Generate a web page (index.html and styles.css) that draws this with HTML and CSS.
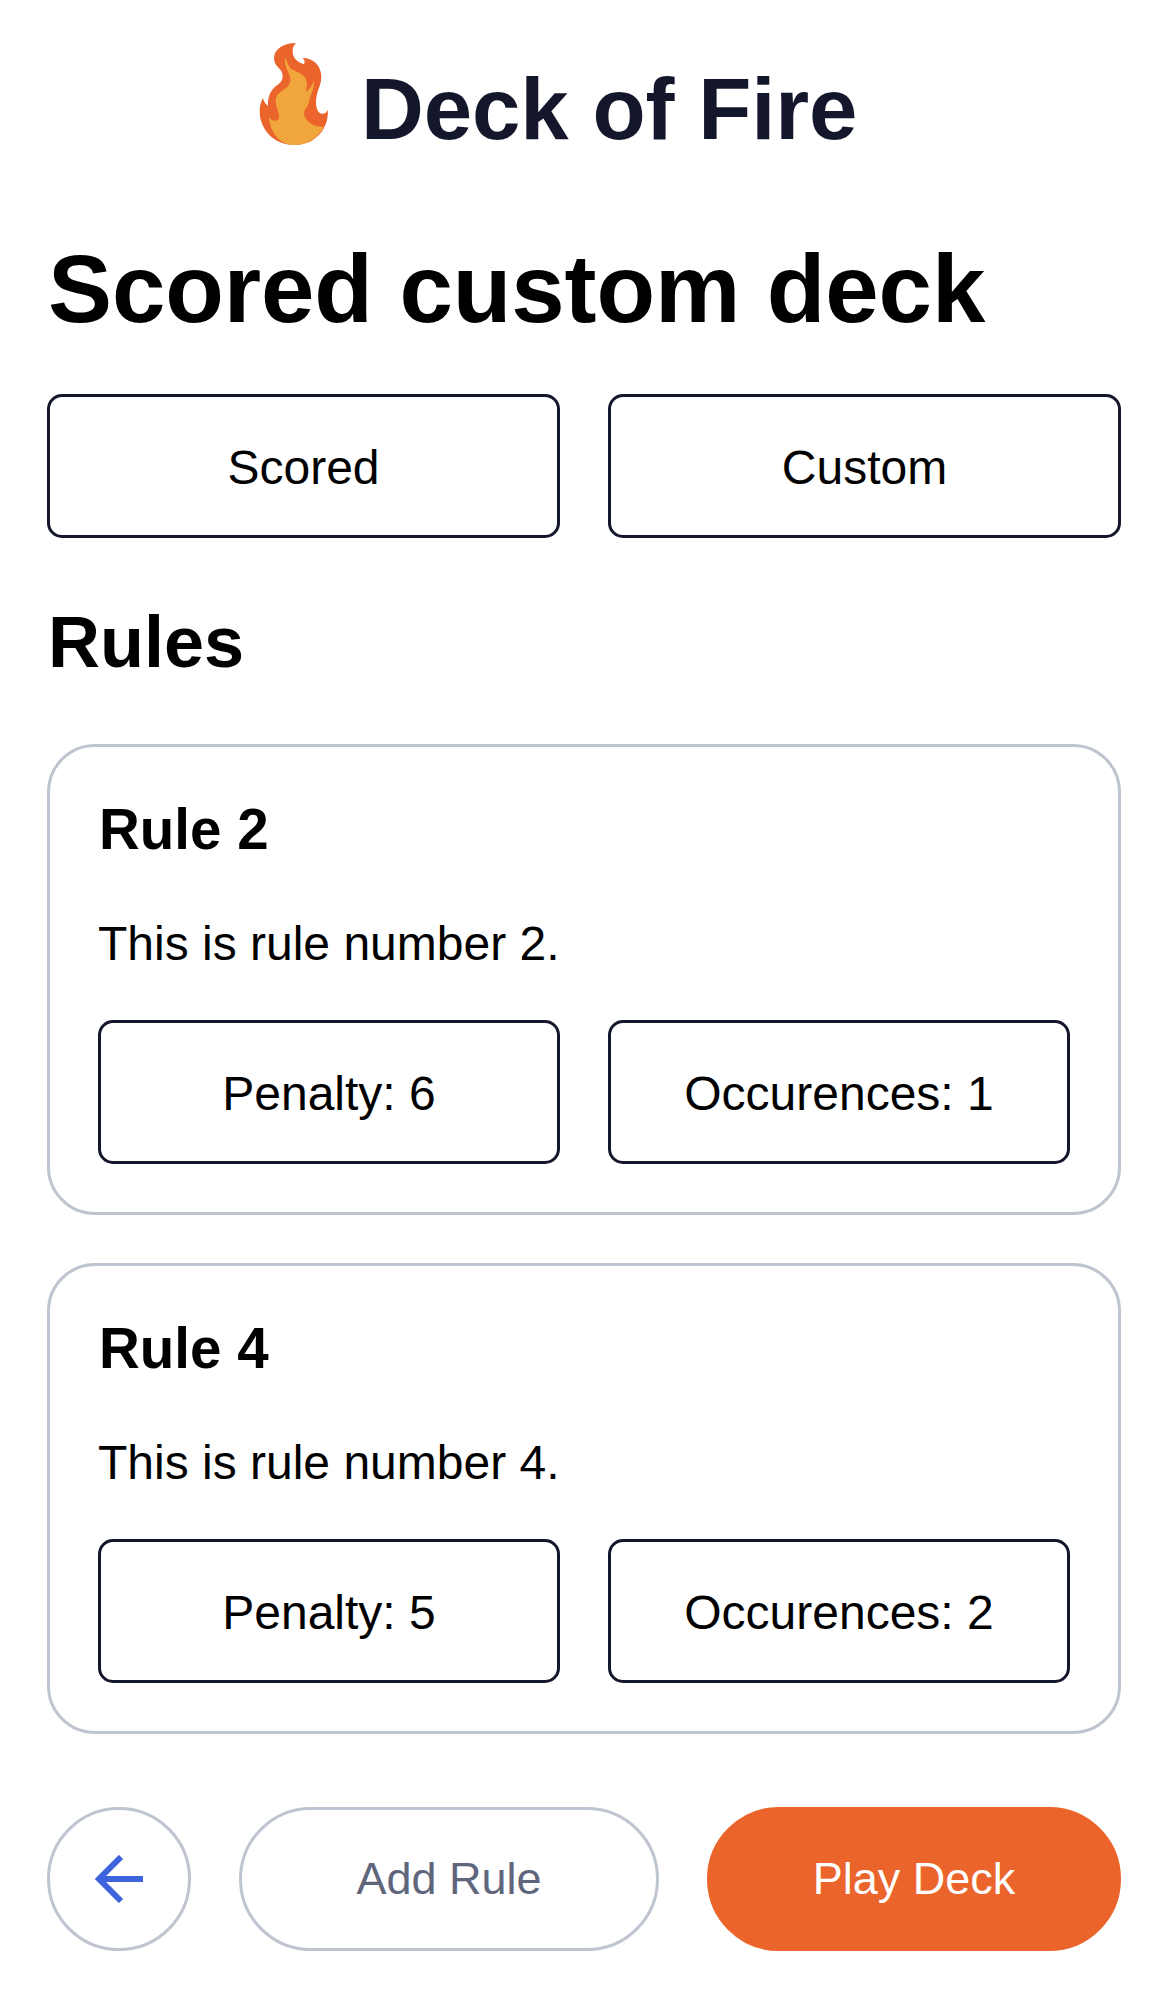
FILE: index.html
```html
<!DOCTYPE html>
<html lang="en">
<head>
<meta charset="utf-8">
<title>Deck of Fire</title>
<link rel="stylesheet" href="styles.css">
</head>
<body>
<header class="brand">
  <svg class="flame" viewBox="57 66 210 312" aria-hidden="true">
    <path fill="#eb642b" d="M163 375C98 375 59 325 59 273C59 258 63 244 69 234C72 246 77 253 84 258C82 228 94 209 111 196C124 187 128 179 128 168C128 143 102 143 102 114C102 88 132 68 168 69C156 80 156 96 161 109C166 122 182 131 192 132C196 125 193 118 187 114C219 113 244 137 244 170C244 197 228 214 228 246C228 267 235 281 246 281C255 281 261 276 263 269C268 317 233 375 163 375Z"/>
    <path fill="#f1a63b" d="M163 375C126 375 94 348 86 291C94 304 112 307 117 293C121 280 107 266 107 242C107 209 151 211 151 179C151 158 129 139 136 111C141 129 146 142 158 149C170 156 189 159 198 178C202 188 202 199 197 215C210 208 216 197 222 181C222 198 220 208 214 222C205 243 208 255 196 268C183 285 206 324 252 320C234 353 203 375 163 375Z"/>
  </svg>
  <span class="brand-name">Deck of Fire</span>
</header>
<main class="deck">
  <h1 class="deck-title">Scored custom deck</h1>
  <div class="pair"><div class="tag">Scored</div><div class="tag">Custom</div></div>
  <h2 class="section-title">Rules</h2>
  <section class="rules">
    <article class="rule">
      <h3 class="rule-title">Rule 2</h3>
      <p class="rule-text">This is rule number 2.</p>
      <div class="pair"><div class="tag">Penalty: 6</div><div class="tag">Occurences: 1</div></div>
    </article>
    <article class="rule">
      <h3 class="rule-title">Rule 4</h3>
      <p class="rule-text">This is rule number 4.</p>
      <div class="pair"><div class="tag">Penalty: 5</div><div class="tag">Occurences: 2</div></div>
    </article>
  </section>
</main>
<nav class="actions">
  <button class="button back" aria-label="Back"><svg class="arrow" viewBox="0 0 48 48" aria-hidden="true"><path d="M26 2L4 24L26 46M4 24H48"/></svg></button>
  <button class="button add">Add Rule</button>
  <button class="button play">Play Deck</button>
</nav>
</body>
</html>
```
FILE: styles.css
```css
* { box-sizing: border-box; }
body {
  margin: 0;
  padding: 0 48px 0 47px;
  background: #fff;
  color: #000;
  font-family: "Liberation Sans", Arial, sans-serif;
  font-size: 48px;
}
.brand {
  display: flex;
  height: 218px;
  padding: 42px 0 0 212px;
  gap: 32px;
}
.flame { width: 70px; height: 104px; }
.brand-name {
  padding-top: 17px;
  color: #14172b;
  font-size: 87px;
  font-weight: bold;
  line-height: 100px;
  letter-spacing: -0.15px;
  white-space: nowrap;
}
.deck-title {
  height: 176px;
  margin: 0;
  padding: 16px 0 0 1px;
  font-size: 96px;
  line-height: 110px;
  letter-spacing: -0.1px;
  white-space: nowrap;
}
.pair { display: grid; grid-template-columns: 1fr 1fr; gap: 48px; }
.tag {
  display: flex;
  align-items: center;
  justify-content: center;
  height: 144px;
  padding-top: 3px;
  border: 3px solid #14172b;
  border-radius: 15px;
  white-space: nowrap;
}
.section-title {
  height: 206px;
  margin: 0;
  padding: 62px 0 0 1px;
  font-size: 72px;
  line-height: 84px;
}
.rules { display: grid; gap: 48px; }
.rule {
  height: 471px;
  padding: 48px;
  border: 3px solid #bfc4d1;
  border-radius: 48px;
}
.rule-title { margin: 0; padding-left: 1px; font-size: 56.5px; line-height: 70px; }
.rule-text { margin: 50px 0 48px; line-height: 57px; }
.actions {
  display: grid;
  grid-template-columns: 144px 420px 1fr;
  gap: 48px;
  margin-top: 73px;
}
.button {
  display: flex;
  align-items: center;
  justify-content: center;
  height: 144px;
  padding: 0;
  border: 3px solid #bfc4d1;
  border-radius: 72px;
  background: #fff;
  color: #5f667c;
  font: inherit;
  font-size: 45px;
}
.play { border-color: #eb642b; background: #eb642b; color: #fff; }
.arrow { width: 48px; height: 48px; fill: none; stroke: #3d64dc; stroke-width: 6; }
```
